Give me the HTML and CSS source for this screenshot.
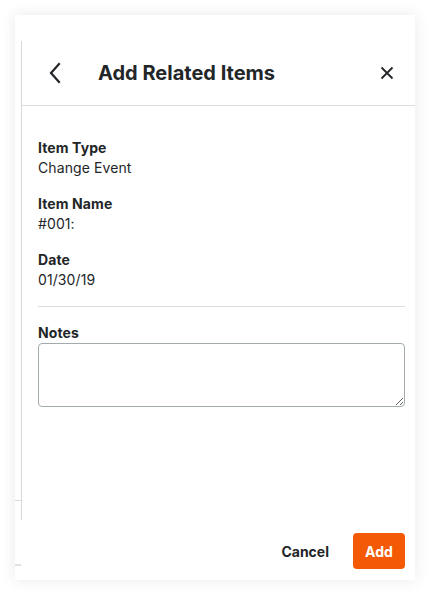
FILE: index.html
```html
<!DOCTYPE html>
<html>
<head>
<meta charset="utf-8">
<link rel="stylesheet" href="styles.css">
</head>
<body>
<div class="card">
  <div class="body">
    <div class="gutter">
      <div class="tick tick-a"></div>
    </div>
    <div class="panel">
      <div class="header">
        <button class="icon-btn back" aria-label="Back">
          <svg width="14" height="22" viewBox="0 0 14 22"><path d="M11 2 L3 11 L11 20" fill="none" stroke="#232628" stroke-width="2.2" stroke-linecap="square"/></svg>
        </button>
        <h1 class="title">Add Related Items</h1>
        <button class="icon-btn close" aria-label="Close">
          <svg width="14" height="14" viewBox="0 0 14 14"><path d="M1.5 1.5 L12.5 12.5 M12.5 1.5 L1.5 12.5" fill="none" stroke="#232628" stroke-width="1.8"/></svg>
        </button>
      </div>
      <div class="content">
        <div class="field">
          <div class="label">Item Type</div>
          <div class="value">Change Event</div>
        </div>
        <div class="field">
          <div class="label">Item Name</div>
          <div class="value">#001:</div>
        </div>
        <div class="field">
          <div class="label">Date</div>
          <div class="value">01/30/19</div>
        </div>
        <hr class="divider">
        <div class="label">Notes</div>
        <textarea class="notes"></textarea>
      </div>
    </div>
  </div>
  <div class="footer">
    <div class="gutter">
      <div class="tick tick-b"></div>
    </div>
    <div class="actions">
      <button class="btn cancel">Cancel</button>
      <button class="btn add">Add</button>
    </div>
  </div>
</div>
</body>
</html>
```
FILE: styles.css
```css
* { box-sizing: border-box; }
html, body { margin: 0; padding: 0; background: #ffffff; }
body {
  font-family: Inter, "Noto Sans", sans-serif;
  color: #232628;
  padding: 15px;
  width: 430px;
  height: 595px;
}
.card {
  width: 400px;
  height: 565px;
  background: #fff;
  box-shadow: 0 0 14px rgba(40, 50, 50, 0.10);
  padding-top: 26px;
  display: flex;
  flex-direction: column;
}
.body {
  display: flex;
  height: 479px;
}
.gutter {
  width: 6px;
  flex: none;
  display: flex;
  flex-direction: column;
}
.tick {
  height: 1px;
  background: #d6dadc;
}
.tick-a { margin-top: 459px; }
.tick-b { margin-top: 44px; height: 2px; background: #dfe2e3; }
.panel {
  flex: 1;
  border-left: 1px solid #d6dadc;
  display: flex;
  flex-direction: column;
}
.header {
  height: 65px;
  border-bottom: 1px solid #dcdfe0;
  display: flex;
  align-items: center;
  padding: 0 0 1px 0;
}
.icon-btn {
  border: 0;
  background: none;
  padding: 0;
  display: flex;
  align-items: center;
  justify-content: center;
}
.back { width: 14px; height: 22px; margin-left: 26px; margin-top: 1px; }
.title {
  margin: 0 0 0 36px;
  font-size: 20px;
  font-weight: 700;
  flex: 1;
  line-height: 26px;
}
.close { width: 14px; height: 14px; margin-right: 21px; margin-top: 1px; }
.content {
  padding: 32px 10px 0 16px;
  display: flex;
  flex-direction: column;
}
.field { margin-bottom: 16px; }
.label {
  font-size: 14px;
  font-weight: 700;
  line-height: 20px;
  letter-spacing: 0.1px;
}
.value {
  font-size: 14px;
  line-height: 20px;
  letter-spacing: 0.1px;
}
.divider {
  border: 0;
  border-top: 1px solid #dcdfe0;
  margin: 0 0 16px 0;
  height: 0;
}
.notes {
  display: block;
  width: 100%;
  height: 64px;
  border: 1px solid #a3abae;
  border-radius: 4px;
  resize: vertical;
  font-family: inherit;
  margin: 0;
}
.footer {
  display: flex;
  height: 60px;
}
.actions {
  flex: 1;
  display: flex;
  justify-content: flex-end;
  align-items: center;
  gap: 24px;
  padding-right: 10px;
  padding-top: 2px;
}
.btn {
  font-family: inherit;
  font-size: 14px;
  font-weight: 700;
  border: 0;
  background: none;
  color: #232628;
  padding: 0;
  height: 36px;
  border-radius: 4px;
}
.add {
  background: #f45a06;
  color: #fff;
  width: 52px;
}
```
